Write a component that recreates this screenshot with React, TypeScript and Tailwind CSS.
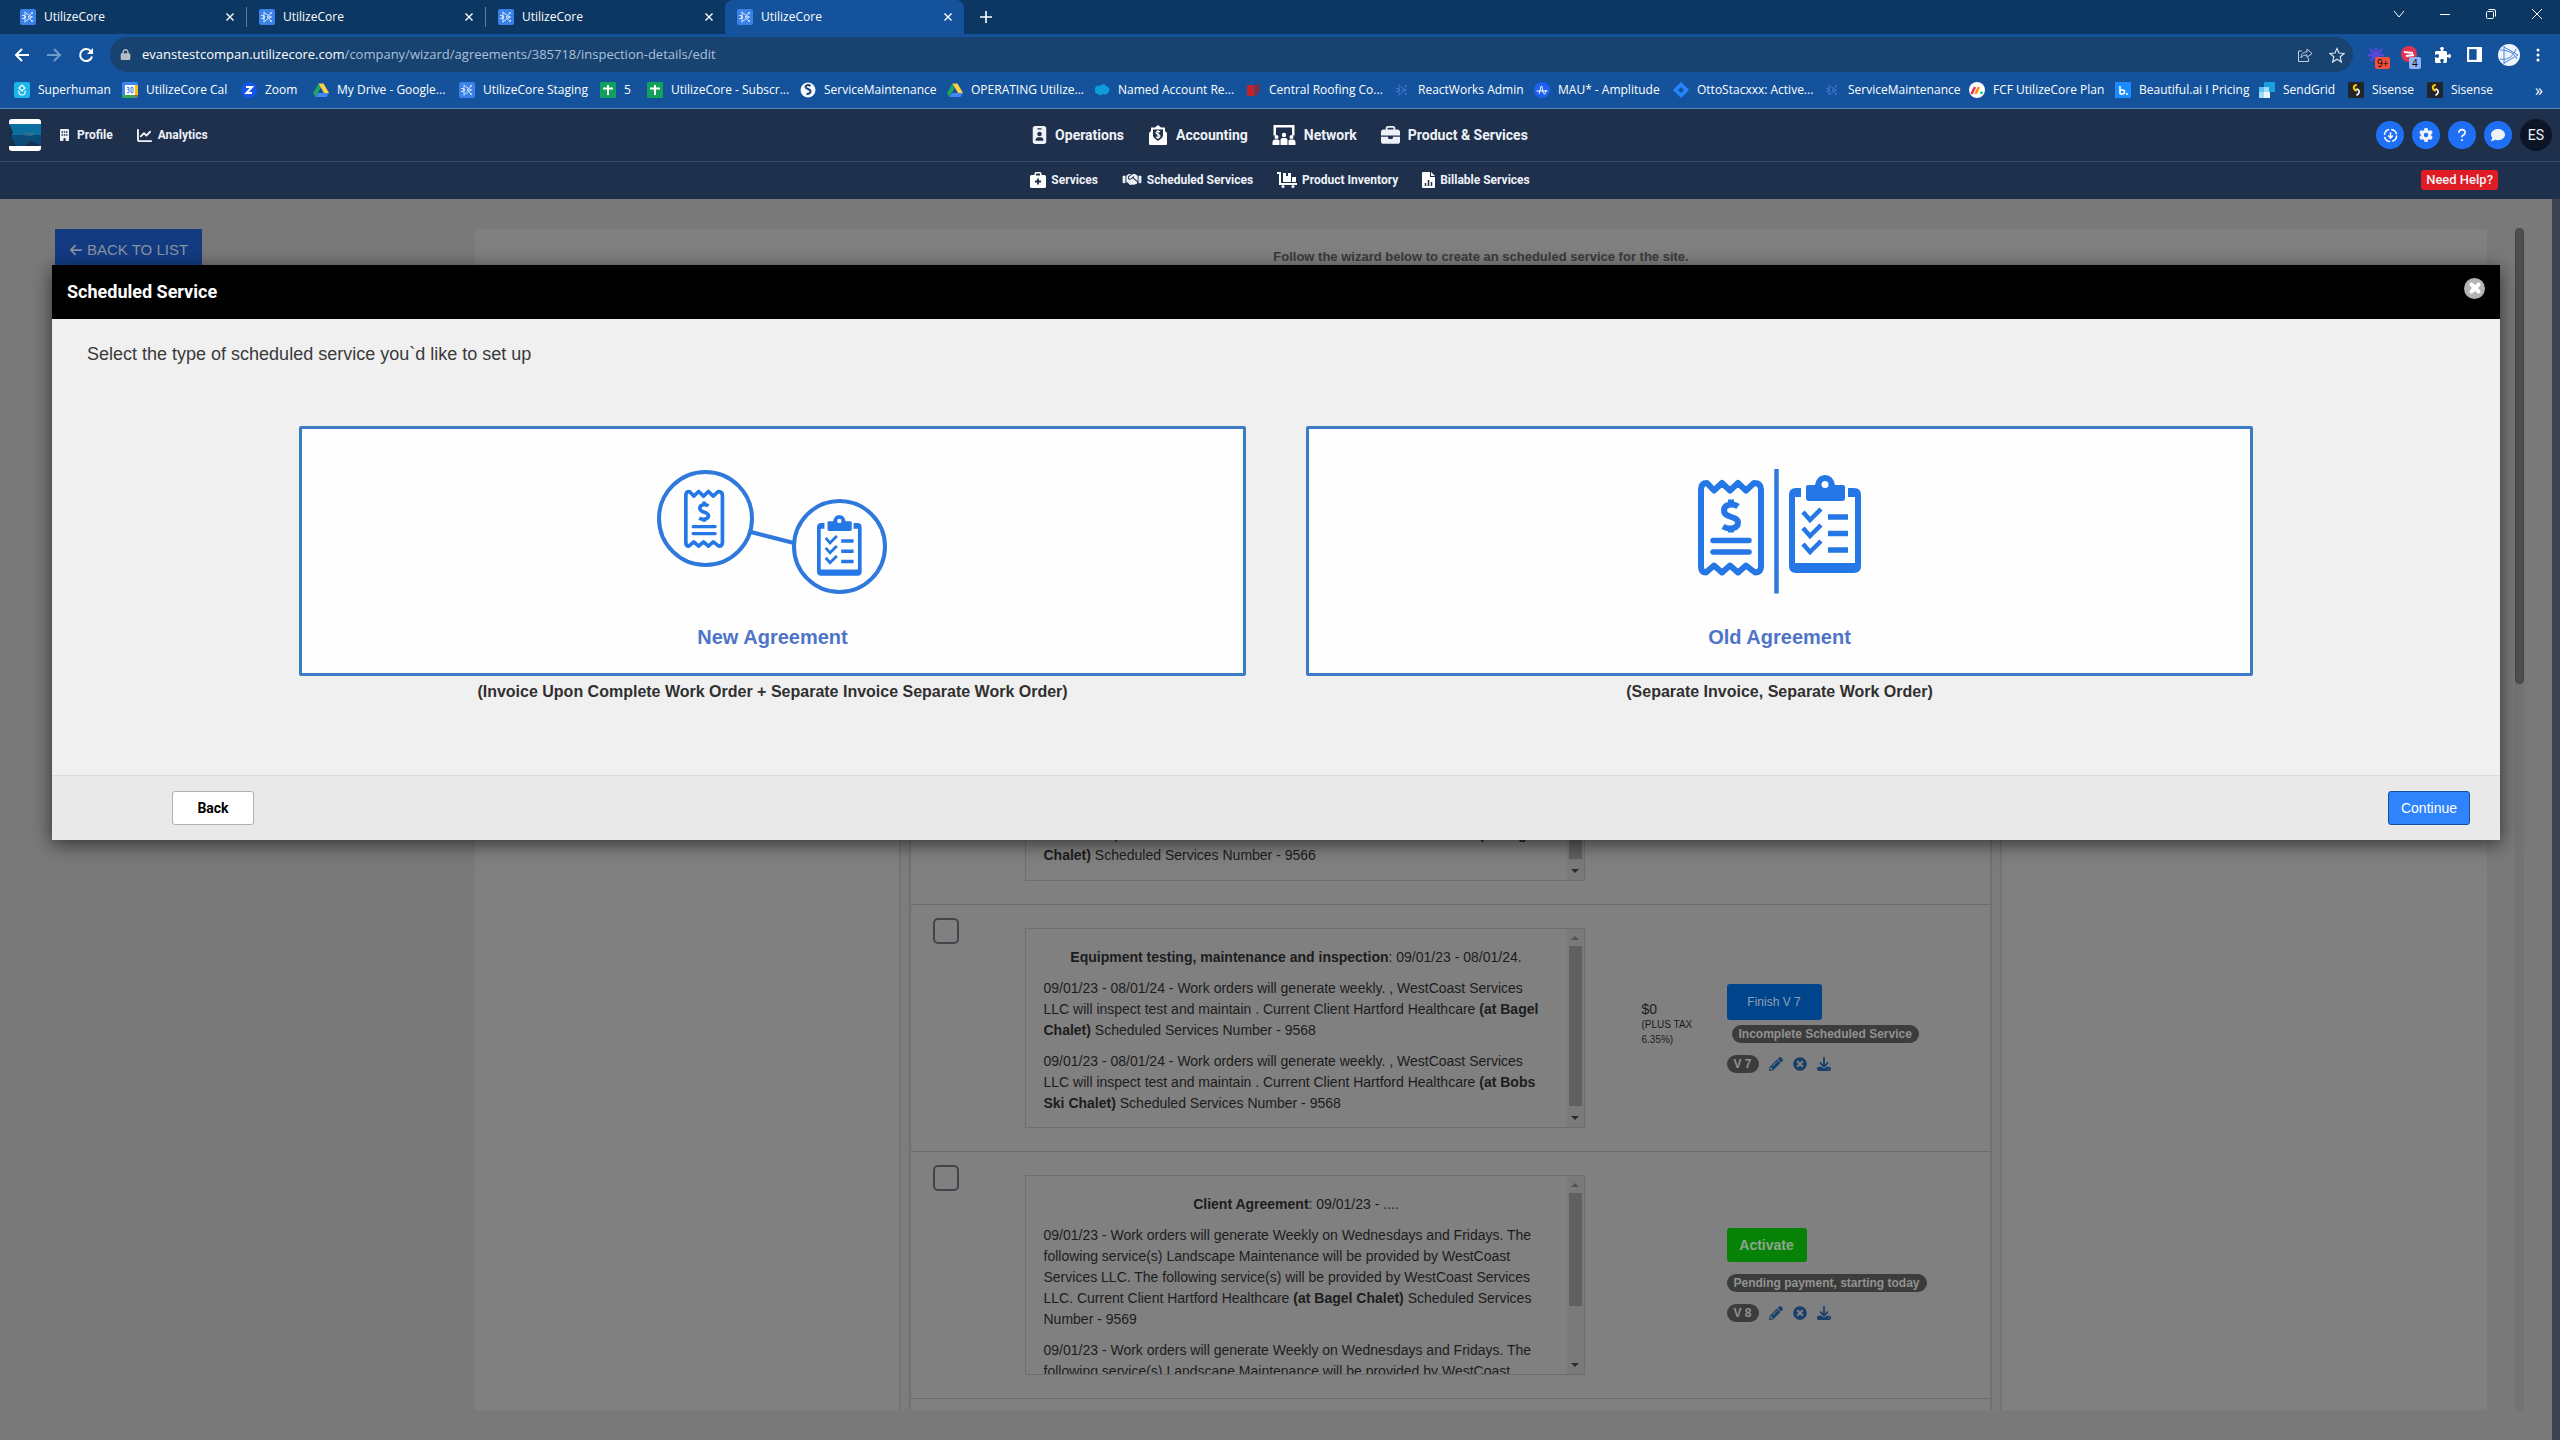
import React from "react";
import {
  FaArrowLeft,
  FaBuilding,
  FaChartLine,
  FaIdBadge,
  FaBriefcase,
  FaHandshake,
  FaDownload,
  FaGear,
  FaQuestion,
  FaComment,
  FaPuzzlePiece,
  FaLock,
} from "react-icons/fa6";
import { FaPencilAlt, FaTimesCircle } from "react-icons/fa";

/* ---------- favicons ---------- */

function CoreIcon({ plain = false }: { plain?: boolean }) {
  const c = plain ? "#3f6fd0" : "#cfe0ff";
  return (
    <svg viewBox="0 0 16 16" className="size-4 shrink-0">
      {!plain && <rect width="16" height="16" rx="2" fill="#3b82e8" />}
      <g fill="none" stroke={c} strokeWidth="1">
        <path d="M5 2.5v11M5 3.5l7 4.5-7 4.5M12.5 3.5L8 8l4.5 4.5" />
        <path d="M2 6.5h3M2 9.5h3M8 8h5" />
      </g>
      <circle cx="5" cy="8" r="1.2" fill={c} />
      <circle cx="12" cy="4" r="1" fill={c} />
      <circle cx="12" cy="12" r="1" fill={c} />
    </svg>
  );
}

function Fav({ kind }: { kind: string }) {
  if (kind === "core") return <CoreIcon />;
  if (kind === "coreplain") return <CoreIcon plain />;
  return (
    <svg viewBox="0 0 16 16" className="size-4 shrink-0">
      {kind === "superhuman" && (
        <>
          <rect width="16" height="16" rx="2" fill="#1cb5e8" />
          <path d="M8 3l3 3-3 3-3-3zM5 8.500c-1 3 1 4.500 3 4.500s4-1.500 3-4.500" fill="none" stroke="#fff" strokeWidth="1.200" />
        </>
      )}
      {kind === "cal" && (
        <>
          <rect width="16" height="16" rx="2" fill="#4285f4" />
          <path d="M13 3h3v10h-3z" fill="#fbbc04" />
          <path d="M3 13h10v3H2a2 2 0 0 1-2-2v-1z" fill="#34a853" />
          <path d="M13 13h3l-3 3z" fill="#ea4335" />
          <rect x="3" y="3" width="10" height="10" fill="#fff" />
          <path d="M5 5.500h2v2H5.500H7v3H5M9 5.500h2v5H9z" fill="none" stroke="#4285f4" />
        </>
      )}
      {kind === "zoom" && (
        <>
          <circle cx="8" cy="8" r="8" fill="#1556e8" />
          <path d="M5 5h6L5.500 11H11" fill="none" stroke="#fff" strokeWidth="2" />
        </>
      )}
      {kind === "drive" && (
        <>
          <path d="M5.500 1.500L0 11l2.500 4L8 5.500z" fill="#1fa463" />
          <path d="M5.500 1.500h5L16 11h-5z" fill="#ffcf48" />
          <path d="M5 11h11l-2.500 4h-11z" fill="#4285f4" />
        </>
      )}
      {kind === "sheet" && (
        <>
          <rect width="16" height="16" rx="1" fill="#12a15b" />
          <path d="M8 3v10M3 6.500h10" stroke="#fff" strokeWidth="2" />
        </>
      )}
      {kind === "globe" && (
        <>
          <circle cx="8" cy="8" r="7.500" fill="#f4f7fb" />
          <path d="M10.500 4c-2-1.500-5-1-5 1s5 2 5 4-1 3-4 3" fill="none" stroke="#1c3f74" strokeWidth="2" />
        </>
      )}
      {kind === "cloud" && <path d="M1 8a3.500 3.500 0 0 1 5-4 3.500 3.500 0 0 1 6 0 4 4 0 0 1 2 7 4 4 0 0 1-5 1 3 3 0 0 1-5 0A3.500 3.500 0 0 1 1 8z" fill="#0d9dda" />}
      {kind === "roof" && (
        <>
          <path d="M2 3h8v11H2z" fill="#c1232b" />
          <path d="M11 2h4v8h-2v3h-2z" fill="#7a2f4f" />
        </>
      )}
      {kind === "amp" && (
        <>
          <circle cx="8" cy="8" r="8" fill="#1e61f0" />
          <path d="M2.500 9h11M5 12c1-2 1.500-8 2.500-8s1 8 3 8c1 0 1-2 1.500-4" fill="none" stroke="#fff" />
        </>
      )}
      {kind === "jira" && (
        <>
          <path d="M8 0l8 8-8 8-8-8z" fill="#2684ff" />
          <path d="M8 5l3 3-3 3-3-3z" fill="#14539c" />
        </>
      )}
      {kind === "monday" && (
        <>
          <circle cx="8" cy="8" r="8" fill="#fff" />
          <path d="M3 11l2.500-5" stroke="#f62b54" strokeWidth="2.600" strokeLinecap="round" />
          <path d="M7 11l2.500-5" stroke="#ff9500" strokeWidth="2.600" strokeLinecap="round" />
          <circle cx="12.500" cy="10.800" r="1.400" fill="#00ca72" />
        </>
      )}
      {kind === "beautiful" && (
        <>
          <rect width="16" height="16" fill="#1a8cff" />
          <path d="M5 4v8M5 12h2.500a2 2 0 0 0 0-4H5" fill="none" stroke="#fff" strokeWidth="1.600" />
          <circle cx="12" cy="12" r="1" fill="#fff" />
        </>
      )}
      {kind === "sendgrid" && (
        <>
          <path d="M5 0h11v10H5z" fill="#1a9fe0" />
          <path d="M0 5h5v5H0z" fill="#5fc3ee" />
          <path d="M0 10h5v6H0zM5 5h5v5H5z" fill="#9ddcf5" />
          <path d="M5 10h6v6H5z" fill="#e6f6fd" />
        </>
      )}
      {kind === "sisense" && (
        <>
          <rect width="16" height="16" fill="#20262c" />
          <path d="M8 3C5 4 5 7 8 8.500" fill="none" stroke="#ffcb05" strokeWidth="2" strokeLinecap="round" />
          <path d="M9 7c3 1.500 3 4 0 6" fill="none" stroke="#fff" strokeWidth="1.600" strokeLinecap="round" />
        </>
      )}
    </svg>
  );
}

/* ---------- browser chrome ---------- */

const bookmarks = [
  { k: "superhuman", t: "Superhuman", w: "w-[108px]" },
  { k: "cal", t: "UtilizeCore Cal", w: "w-[119px]" },
  { k: "zoom", t: "Zoom", w: "w-[72px]" },
  { k: "drive", t: "My Drive - Google...", w: "w-[146px]" },
  { k: "core", t: "UtilizeCore Staging", w: "w-[141px]" },
  { k: "sheet", t: "5", w: "w-[47px]" },
  { k: "sheet", t: "UtilizeCore - Subscr...", w: "w-[153px]" },
  { k: "globe", t: "ServiceMaintenance", w: "w-[147px]" },
  { k: "drive", t: "OPERATING Utilize...", w: "w-[147px]" },
  { k: "cloud", t: "Named Account Re...", w: "w-[151px]" },
  { k: "roof", t: "Central Roofing Co...", w: "w-[149px]" },
  { k: "coreplain", t: "ReactWorks Admin", w: "w-[140px]" },
  { k: "amp", t: "MAU* - Amplitude", w: "w-[139px]" },
  { k: "jira", t: "OttoStacxxx: Active...", w: "w-[151px]" },
  { k: "coreplain", t: "ServiceMaintenance", w: "w-[145px]" },
  { k: "monday", t: "FCF UtilizeCore Plan", w: "w-[146px]" },
  { k: "beautiful", t: "Beautiful.ai I Pricing", w: "w-[144px]" },
  { k: "sendgrid", t: "SendGrid", w: "w-[89px]" },
  { k: "sisense", t: "Sisense", w: "w-[79px]" },
  { k: "sisense", t: "Sisense", w: "w-[79px]" },
];

function Tab({ active = false, divider = false }: { active?: boolean; divider?: boolean }) {
  return (
    <div className={active ? "h-full w-[239px] rounded-t-lg bg-[#14539c] py-[7px]" : "h-full w-[239px] py-[7px]"}>
      <div className={divider ? "flex h-5 items-center border-r border-[#5b7ba0] pr-2 pl-3" : "flex h-5 items-center pr-2 pl-3"}>
        <CoreIcon />
        <span className="ml-2 grow text-[12px]">UtilizeCore</span>
        <button aria-label="Close tab" className="flex size-4 items-center justify-center">
          <svg viewBox="0 0 8 8" className="size-2">
            <path d="M0.500 0.500l7 7M7.500 0.500l-7 7" stroke="#fff" strokeWidth="1.400" />
          </svg>
        </button>
      </div>
    </div>
  );
}

function Browser() {
  return (
    <div className="bg-[#14539c] font-['Open_Sans','Noto_Sans',sans-serif] text-white">
      <div className="flex h-[34px] bg-[#0c3762] pl-2">
        <Tab divider />
        <Tab divider />
        <Tab />
        <Tab active />
        <button aria-label="New tab" className="ml-[14px] flex w-4 items-center justify-center">
          <svg viewBox="0 0 12 12" className="size-3">
            <path d="M6 0v12M0 6h12" stroke="#fff" strokeWidth="1.600" />
          </svg>
        </button>
        <div className="ml-auto flex items-start gap-[34px] pt-2 pr-[17px]">
          <svg viewBox="0 0 12 12" className="size-3">
            <path d="M1 3l5 6 5-6" fill="none" stroke="#fff" />
          </svg>
          <svg viewBox="0 0 12 12" className="size-3">
            <path d="M1 6.500h10" stroke="#fff" />
          </svg>
          <svg viewBox="0 0 12 12" className="size-3">
            <rect x="1.500" y="3.500" width="7" height="7" rx="1" fill="none" stroke="#fff" />
            <path d="M3.500 1.500H9a1.500 1.500 0 0 1 1.500 1.500v5.500" fill="none" stroke="#fff" />
          </svg>
          <svg viewBox="0 0 12 12" className="size-3">
            <path d="M1 1l10 10M11 1L1 11" stroke="#fff" />
          </svg>
        </div>
      </div>

      <div className="flex h-[41px] items-center pt-[3px] pb-[3px] pl-[14px]">
        <svg viewBox="0 0 16 16" className="size-4">
          <path d="M15 8H2M8 2L2 8l6 6" fill="none" stroke="#fff" strokeWidth="2" />
        </svg>
        <svg viewBox="0 0 16 16" className="ml-4 size-4">
          <path d="M1 8h13M8 2l6 6-6 6" fill="none" stroke="#6f9acb" strokeWidth="2" />
        </svg>
        <svg viewBox="0 0 16 16" className="ml-4 size-4">
          <path d="M13 4.500A6 6 0 1 0 14 9.500" fill="none" stroke="#fff" strokeWidth="2" />
          <path d="M15 1v6H9z" fill="#fff" />
        </svg>
        <div className="ml-4 flex h-[35px] grow items-center rounded-full bg-[#18426f] pr-2 pl-[10px]">
          <FaLock className="size-[11px] text-[#b5bcc6]" />
          <span className="ml-[11px] text-[13px] text-[#a9c1de]">
            <span className="text-white">evanstestcompan.utilizecore.com</span>/company/wizard/agreements/385718/inspection-details/edit
          </span>
          <svg viewBox="0 0 16 16" className="ml-auto size-4">
            <path d="M5 4H1.500v10.500h10V11" fill="none" stroke="#c3d0df" />
            <path d="M4 11c0-4 2-6 6-6V2l5 4.500-5 4V8c-3 0-4.500.5-6 3z" fill="none" stroke="#c3d0df" />
          </svg>
          <svg viewBox="0 0 16 16" className="ml-4 size-4">
            <path d="M8 1.500l2 4.500 5 .5-3.800 3.200L12.300 15 8 12.200 3.700 15l1.100-5.300L1 6.500 6 6z" fill="none" stroke="#dbe5f0" strokeWidth="1.200" />
          </svg>
        </div>
        <div className="flex items-center gap-4 pr-5 pl-[14px]">
          <div className="relative">
            <svg viewBox="0 0 20 20" className="size-[18px]">
              <path d="M10 1v18M1 10h18M3.500 3.500l13 13M16.500 3.500l-13 13" stroke="#5747d8" strokeWidth="2.600" />
            </svg>
            <span className="absolute top-[11px] left-2 rounded-xs bg-[#f0503c] px-[2px] text-[10px] leading-3 text-black">9+</span>
          </div>
          <div className="relative">
            <svg viewBox="0 0 18 18" className="size-[18px]">
              <circle cx="8" cy="8" r="8" fill="#e53450" />
              <path d="M3 6l9 1M5 10l8-1" stroke="#fff" strokeWidth="2" />
            </svg>
            <span className="absolute top-[11px] left-2 rounded-xs bg-[#8fb4f5] px-[3px] text-[10px] leading-3 text-black">4</span>
          </div>
          <FaPuzzlePiece className="size-4" />
          <svg viewBox="0 0 14 14" className="size-[15px]">
            <rect x="1" y="1" width="12" height="12" fill="none" stroke="#fff" strokeWidth="2" />
            <path d="M9 1h4v12H9z" fill="#fff" />
          </svg>
          <svg viewBox="0 0 22 22" className="size-[22px]">
            <circle cx="11" cy="11" r="11" fill="#eef4fd" />
            <path d="M6 2v18M6 3l14 8-14 8M2 6c6 0 14 2 17 9M2 15C9 17 16 12 18 5" fill="none" stroke="#4b83d8" />
          </svg>
          <svg viewBox="0 0 4 16" className="h-4 w-1">
            <circle cx="2" cy="3" r="1.500" fill="#fff" />
            <circle cx="2" cy="8" r="1.500" fill="#fff" />
            <circle cx="2" cy="13" r="1.500" fill="#fff" />
          </svg>
        </div>
      </div>

      <nav className="flex h-[34px] items-center overflow-hidden border-b border-[#5c88b8] pb-1 pl-[14px] text-[12px] whitespace-nowrap">
        {bookmarks.map((b, i) => (
          <a key={i} href="#" className={`flex items-center gap-2 ${b.w}`}>
            <Fav kind={b.k} />
            <span>{b.t}</span>
          </a>
        ))}
        <span className="mr-[17px] ml-auto text-[16px]">»</span>
      </nav>
    </div>
  );
}

/* ---------- application header ---------- */

function BadgeDollar() {
  return (
    <svg viewBox="0 0 20 20" className="size-5">
      <path d="M10 0l3 2.500h4V6l2 2v11a1 1 0 0 1-1 1H2a1 1 0 0 1-1-1V8l2-2V2.500h4z" fill="#fff" />
      <path d="M5 4.500h10v6c0 2-3 4-5 5.500-2-1.500-5-3.500-5-5.500z" fill="#1f304c" />
      <path d="M12 7c-1-1.200-4-1-4 .8 0 2 4 1.200 4 3.200 0 1.800-3 2-4 .8M10 5v9" fill="none" stroke="#fff" strokeWidth="1.200" />
    </svg>
  );
}

function NetworkIcon() {
  return (
    <svg viewBox="0 0 24 20" className="h-5 w-6" fill="#fff">
      <path d="M1.500 0h21v10.500H20V2.500H4v8H1.500z" />
      <circle cx="4.500" cy="12" r="2" />
      <circle cx="12" cy="10" r="2.200" />
      <circle cx="19.500" cy="12" r="2" />
      <path d="M.5 20v-2.500a3 3 0 0 1 3-3h2a2.500 2.500 0 0 1 2 1V20zM8.500 20v-5a2 2 0 0 1 2-2h3a2 2 0 0 1 2 2v5zM16.500 20v-4.500a2.500 2.500 0 0 1 2-1h2a3 3 0 0 1 3 3V20z" />
    </svg>
  );
}

function MedicalBag() {
  return (
    <svg viewBox="0 0 16 16" className="size-4">
      <path d="M4.500 3V1.500A1.500 1.500 0 0 1 6 0h4a1.500 1.500 0 0 1 1.500 1.500V3h3A1.500 1.500 0 0 1 16 4.500v10a1.500 1.500 0 0 1-1.500 1.500h-13A1.500 1.500 0 0 1 0 14.500v-10A1.500 1.500 0 0 1 1.500 3z" fill="#fff" />
      <path d="M6 2.500h4M8 6.500v6M5 9.500h6" stroke="#1f304c" strokeWidth="1.800" />
    </svg>
  );
}

function CartIcon() {
  return (
    <svg viewBox="0 0 20 16" className="h-4 w-5" fill="#fff">
      <path d="M0 0h4v11h16v2H2V2H0z" />
      <path d="M6 1h3v3h2V1h3v9H6zM15 5h4v5h-4z" />
      <circle cx="6" cy="14.500" r="1.500" />
      <circle cx="16" cy="14.500" r="1.500" />
    </svg>
  );
}

function FileChart() {
  return (
    <svg viewBox="0 0 13 16" className="h-4 w-[13px]">
      <path d="M1 0h7v5h5v10a1 1 0 0 1-1 1H1a1 1 0 0 1-1-1V1a1 1 0 0 1 1-1zM9 0l4 4H9z" fill="#fff" />
      <path d="M3.500 14v-3M6.500 14V8M9.500 14v-4" stroke="#1f304c" strokeWidth="1.500" />
    </svg>
  );
}

function AppHeader() {
  return (
    <header className="bg-[#1f304c] font-['Roboto',sans-serif] font-bold text-[#eef2f8]">
      <div className="grid h-[53px] grid-cols-[1fr_auto_1fr] items-center border-b border-[#34496b]">
        <div className="flex items-center pl-[9px] text-[12px]">
          <div className="flex size-8 flex-col justify-center overflow-hidden rounded-[3px] bg-white">
            <svg viewBox="0 0 32 22" className="h-[22px] w-8">
              <rect width="32" height="22" fill="#0b6f9f" />
              <path d="M0 11h32v11H0z" fill="#0a4a76" />
              <path d="M0 0l4 8-2 5 5 9H0zM16 22l6-5 10 5z" fill="#15304a" />
              <path d="M13 11l5-3 8 1-3 3z" fill="#2c6f90" />
            </svg>
          </div>
          <a href="#" className="ml-[18px] flex items-center gap-[7px]">
            <FaBuilding className="h-3 w-[11px]" />
            Profile
          </a>
          <a href="#" className="ml-6 flex items-center gap-[6px]">
            <FaChartLine className="size-[15px]" />
            Analytics
          </a>
        </div>
        <nav className="flex items-center gap-6 text-[14px]">
          <a href="#" className="flex items-center gap-2">
            <FaIdBadge className="h-[18px] w-[15px]" />
            Operations
          </a>
          <a href="#" className="flex items-center gap-2">
            <BadgeDollar />
            Accounting
          </a>
          <a href="#" className="flex items-center gap-2">
            <NetworkIcon />
            Network
          </a>
          <a href="#" className="flex items-center gap-2">
            <FaBriefcase className="size-[19px]" />
            Product &amp; Services
          </a>
        </nav>
        <div className="flex items-center justify-end gap-2 pr-2">
          <button aria-label="Downloads" className="flex size-7 items-center justify-center rounded-full bg-[#1f6ff5]">
            <svg viewBox="0 0 16 16" className="size-[15px]" fill="none" stroke="#fff" strokeWidth="1.600">
              <circle cx="8" cy="8" r="6.500" strokeDasharray="8 2.200" />
              <path d="M8 4.500v6M5.500 8L8 10.800 10.500 8" />
            </svg>
          </button>
          <button aria-label="Settings" className="flex size-7 items-center justify-center rounded-full bg-[#1f6ff5]">
            <FaGear className="size-[14px]" />
          </button>
          <button aria-label="Help" className="flex size-7 items-center justify-center rounded-full bg-[#1f6ff5]">
            <FaQuestion className="size-[14px]" />
          </button>
          <button aria-label="Chat" className="flex size-7 items-center justify-center rounded-full bg-[#1f6ff5]">
            <FaComment className="size-[14px]" />
          </button>
          <button className="size-8 rounded-full bg-[#0b1526] text-[14px] font-normal">ES</button>
        </div>
      </div>
      <div className="grid h-[37px] grid-cols-[1fr_auto_1fr] items-center pb-[2px] text-[12px]">
        <nav className="col-start-2 flex items-center gap-6">
          <a href="#" className="flex items-center gap-[5px]">
            <MedicalBag />
            Services
          </a>
          <a href="#" className="flex items-center gap-[5px]">
            <FaHandshake className="h-[15px] w-5" />
            Scheduled Services
          </a>
          <a href="#" className="flex items-center gap-[5px]">
            <CartIcon />
            Product Inventory
          </a>
          <a href="#" className="flex items-center gap-[5px]">
            <FileChart />
            Billable Services
          </a>
        </nav>
        <button className="mr-[62px] h-5 justify-self-end rounded-[3px] bg-[#e01b24] px-[5px] text-[13px] font-medium">Need Help?</button>
      </div>
    </header>
  );
}

/* ---------- page behind the dialog ---------- */

function Description({ title, children, thumb }: { title?: React.ReactNode; children: React.ReactNode; thumb: string }) {
  return (
    <div className="flex h-[200px] overflow-hidden border border-[#6e6e6e]">
      <div className="flex grow flex-col gap-[10px] px-[18px] pt-[18px] leading-[21px]">
        {title && <p className="text-center">{title}</p>}
        {children}
      </div>
      <div className="flex w-[17px] shrink-0 flex-col items-center bg-[#7a7a7a]">
        <svg viewBox="0 0 8 4" className="mt-[7px] h-1 w-2">
          <path d="M0 4h8L4 0z" fill="#555" />
        </svg>
        <div className={`mt-[6px] w-[13px] bg-[#606060] ${thumb}`} />
        <svg viewBox="0 0 8 4" className="mt-auto mb-[7px] h-1 w-2">
          <path d="M0 0h8L4 4z" fill="#2c2c2c" />
        </svg>
      </div>
    </div>
  );
}

function WeeklyText({ place, num }: { place: string; num: string }) {
  return (
    <p>
      09/01/23 - 08/01/24 - Work orders will generate weekly. , WestCoast Services LLC will inspect test and maintain . Current Client Hartford Healthcare <b>({place})</b> Scheduled
      Services Number - {num}
    </p>
  );
}

function DaysText() {
  return (
    <p>
      09/01/23 - Work orders will generate Weekly on Wednesdays and Fridays. The following service(s) Landscape Maintenance will be provided by WestCoast Services LLC. The following
      service(s) will be provided by WestCoast Services LLC. Current Client Hartford Healthcare <b>(at Bagel Chalet)</b> Scheduled Services Number - 9569
    </p>
  );
}

function VersionTools({ version }: { version: string }) {
  return (
    <div className="mt-3 flex items-center gap-[10px] text-[#183f6b]">
      <span className="rounded-full bg-[#3c3c3c] px-[7px] text-[12px] leading-[18px] font-bold text-[#929292]">{version}</span>
      <button aria-label="Edit">
        <FaPencilAlt className="size-[14px]" />
      </button>
      <button aria-label="Cancel">
        <FaTimesCircle className="size-[14px]" />
      </button>
      <button aria-label="Download">
        <FaDownload className="size-[14px]" />
      </button>
    </div>
  );
}

function Row({ label, price, actions, children }: { label: string; price?: React.ReactNode; actions?: React.ReactNode; children: React.ReactNode }) {
  return (
    <tr className="border-b border-[#6c6c6c]">
      <td className="w-[115px] pt-[13px] pl-[22px] align-top">
        <input type="checkbox" aria-label={label} className="size-[26px] appearance-none rounded-[5px] border-2 border-[#42464c]" />
      </td>
      <td className="w-[560px] py-[23px]">{children}</td>
      <td className="w-[142px] pb-2 pl-[57px]">{price}</td>
      <td>{actions}</td>
    </tr>
  );
}

function Page() {
  return (
    <main className="flex h-[1241px] overflow-hidden bg-[#797979] font-['Liberation_Sans',Arial,sans-serif] text-[14px] text-[#1c1c1c]">
      <div className="w-[475px] shrink-0 pt-[30px] pl-[55px]">
        <button className="flex h-[42px] w-[147px] items-center justify-center gap-1 bg-[#123b82] text-[15px] text-[#8b93a0]">
          <FaArrowLeft className="size-[14px]" />
          BACK TO LIST
        </button>
      </div>
      <section className="my-[30px] flex h-[1181px] grow flex-col items-center overflow-hidden bg-[#808080]">
        <p className="h-[429px] w-full shrink-0 pt-[18px] text-center text-[13px] font-bold text-[#3a3a3a]">Follow the wizard below to create an scheduled service for the site.</p>
        <div className="mr-[62px] w-[1103px] border-x-2 border-[#747474] bg-[#7c7c7c] px-2">
          <table className="w-full border-collapse border-x-2 border-[#717171] bg-[#808080] text-left">
            <tbody>
              <Row label="Select service 9566">
                <Description thumb="h-[160px]">
                  <div className="mt-auto mb-[14px]">
                    <WeeklyText place="at Bagel Chalet" num="9566" />
                  </div>
                </Description>
              </Row>
              <Row
                label="Select service 9568"
                price={
                  <>
                    <p className="text-[14px] leading-4">$0</p>
                    <p className="w-16 text-[10px] leading-[15px]">(PLUS TAX 6.35%)</p>
                  </>
                }
                actions={
                  <>
                    <button className="block h-9 w-[95px] rounded-[3px] bg-[#00458c] text-[12px] text-[#8fa0b4]">Finish V 7</button>
                    <p className="mt-[5px] ml-[5px] w-fit rounded-full bg-[#3c3c3c] px-[7px] text-[12px] leading-[18px] font-bold text-[#929292]">Incomplete Scheduled Service</p>
                    <VersionTools version="V 7" />
                  </>
                }
              >
                <Description
                  title={
                    <>
                      <b>Equipment testing, maintenance and inspection</b>: 09/01/23 - 08/01/24.
                    </>
                  }
                  thumb="h-[160px]"
                >
                  <WeeklyText place="at Bagel Chalet" num="9568" />
                  <WeeklyText place="at Bobs Ski Chalet" num="9568" />
                </Description>
              </Row>
              <Row
                label="Select service 9569"
                actions={
                  <>
                    <button className="block h-[34px] w-20 rounded-[3px] bg-[#068206] text-[14px] font-bold text-[#8fa58f]">Activate</button>
                    <p className="mt-3 w-fit rounded-full bg-[#3c3c3c] px-[7px] text-[12px] leading-[18px] font-bold text-[#929292]">Pending payment, starting today</p>
                    <VersionTools version="V 8" />
                  </>
                }
              >
                <Description
                  title={
                    <>
                      <b>Client Agreement</b>: 09/01/23 - ....
                    </>
                  }
                  thumb="h-[113px]"
                >
                  <DaysText />
                  <DaysText />
                </Description>
              </Row>
            </tbody>
          </table>
          <div className="h-10 border-x-2 border-[#717171] bg-[#808080]" />
        </div>
      </section>
      <div className="my-[29px] ml-[28px] w-[9px] shrink-0 bg-[#737373]">
        <div className="h-[456px] rounded-full border border-[#434343] bg-[#4e4e4e]" />
      </div>
      <div className="ml-[28px] w-2 shrink-0 bg-[#3d4250]" />
    </main>
  );
}

/* ---------- dialog ---------- */

function Receipt() {
  return (
    <g fill="none" stroke="#2477e4" strokeLinecap="round" strokeLinejoin="round">
      <path
        d="M3 9Q3 2.500 9 2.500L16 10L24 2.500L32 10L40 2.500L48 10L56 2.500Q63 2.500 63 9V86Q63 92 57 92L48 85L40 92L32 85L24 92L16 85L8 92Q3 92 3 86Z"
        strokeWidth="6"
      />
      <path d="M15 60h36M15 71.500h36" strokeWidth="5.500" />
      <path d="M40 26C36 23 26 23 26 30C26 38 40 35 40 42C40 49 30 49 25 46" strokeWidth="6" strokeLinecap="butt" />
      <path d="M33 19v6M33 48v4" strokeWidth="6" strokeLinecap="butt" />
    </g>
  );
}

function Clipboard() {
  return (
    <g>
      <path d="M12 13H7Q0 13 0 20V91Q0 98 7 98H65Q72 98 72 91V20Q72 13 65 13H59V22H66V88H6V22H12Z" fill="#2477e4" />
      <path d="M17 12Q17 10 19 10H26Q28 0 36 0Q44 0 46 10H54Q56 10 56 12V23Q56 26 53 26H20Q17 26 17 23Z" fill="#2477e4" />
      <circle cx="36" cy="9.500" r="3.500" fill="#fff" />
      <path d="M14 37l7 8 11-11M14 53l7 8 11-11M14 69l7 8 11-11" fill="none" stroke="#2477e4" strokeWidth="4.500" />
      <path d="M39 42h20M39 58.500h20M39 75h20" stroke="#2477e4" strokeWidth="5.500" />
    </g>
  );
}

function NewArt() {
  return (
    <svg viewBox="650 460 245 140" className="h-[140px] w-[245px]">
      <circle cx="705.500" cy="518.500" r="46.500" fill="none" stroke="#2f78dc" strokeWidth="4" />
      <circle cx="839.500" cy="546.500" r="45.500" fill="none" stroke="#2f78dc" strokeWidth="4" />
      <path d="M751 532l43 11" stroke="#2f78dc" strokeWidth="4" />
      <g transform="translate(684 490) scale(.61)">
        <Receipt />
      </g>
      <g transform="translate(817 515) scale(.62)">
        <Clipboard />
      </g>
    </svg>
  );
}

function OldArt() {
  return (
    <svg viewBox="1657 460 245 140" className="h-[140px] w-[245px]">
      <path d="M1776.500 469v124.500" stroke="#2f78dc" strokeWidth="4.500" />
      <g transform="translate(1698 480.500)">
        <Receipt />
      </g>
      <g transform="translate(1789 475)">
        <Clipboard />
      </g>
    </svg>
  );
}

function Choice({ art, title, note }: { art: React.ReactNode; title: string; note: string }) {
  return (
    <div className="flex flex-col items-center">
      <button className="flex h-[250px] w-full flex-col items-center rounded-xs border-[3px] border-[#3a7bc4] bg-[#fefefe] pt-[31px]">
        {art}
        <span className="mt-[25px] text-[20px] leading-6 font-bold text-[#4e74c8]">{title}</span>
      </button>
      <p className="mt-[5px] text-[16px] leading-[22px] font-bold text-[#303030]">{note}</p>
    </div>
  );
}

function Dialog() {
  return (
    <div role="dialog" aria-label="Scheduled Service" className="absolute inset-x-0 top-[265px] mr-[60px] ml-[52px] bg-[#f0f0f0] font-['Liberation_Sans',Arial,sans-serif] shadow-[0_4px_18px_rgba(0,0,0,0.6)]">
      <div className="flex h-[54px] items-center justify-between bg-black px-[15px] pb-[2px]">
        <h2 className="font-['Roboto',sans-serif] text-[18px] font-bold text-white">Scheduled Service</h2>
        <button aria-label="Close" className="mb-[6px] flex size-[21px] items-center justify-center rounded-full bg-[#b4b4b4]">
          <svg viewBox="0 0 12 12" className="size-3">
            <path d="M2.500 2.500l7 7M9.500 2.500l-7 7" stroke="#fff" strokeWidth="4" strokeLinecap="round" />
          </svg>
        </button>
      </div>
      <div className="h-[456px]">
        <p className="pt-[23px] pl-[35px] text-[18px] leading-6 text-[#3a3a3a]">Select the type of scheduled service you`d like to set up</p>
        <div className="mt-[60px] grid grid-cols-2 gap-[60px] px-[247px]">
          <Choice art={<NewArt />} title="New Agreement" note="(Invoice Upon Complete Work Order + Separate Invoice Separate Work Order)" />
          <Choice art={<OldArt />} title="Old Agreement" note="(Separate Invoice, Separate Work Order)" />
        </div>
      </div>
      <div className="flex h-[65px] items-center justify-between border-t border-[#dcdcdc] bg-[#e9e9e9] pr-[30px] pl-[120px]">
        <button className="h-[34px] w-[82px] rounded-[3px] border border-[#b0b0b0] bg-white font-['Roboto',sans-serif] text-[14px] font-bold text-black">Back</button>
        <button className="h-[34px] w-[82px] rounded-[3px] border border-[#1c4c9c] bg-[#2f83fb] text-[14px] text-white">Continue</button>
      </div>
    </div>
  );
}

export default function App() {
  return (
    <div className="relative min-h-screen overflow-hidden">
      <Browser />
      <AppHeader />
      <Page />
      <Dialog />
    </div>
  );
}
